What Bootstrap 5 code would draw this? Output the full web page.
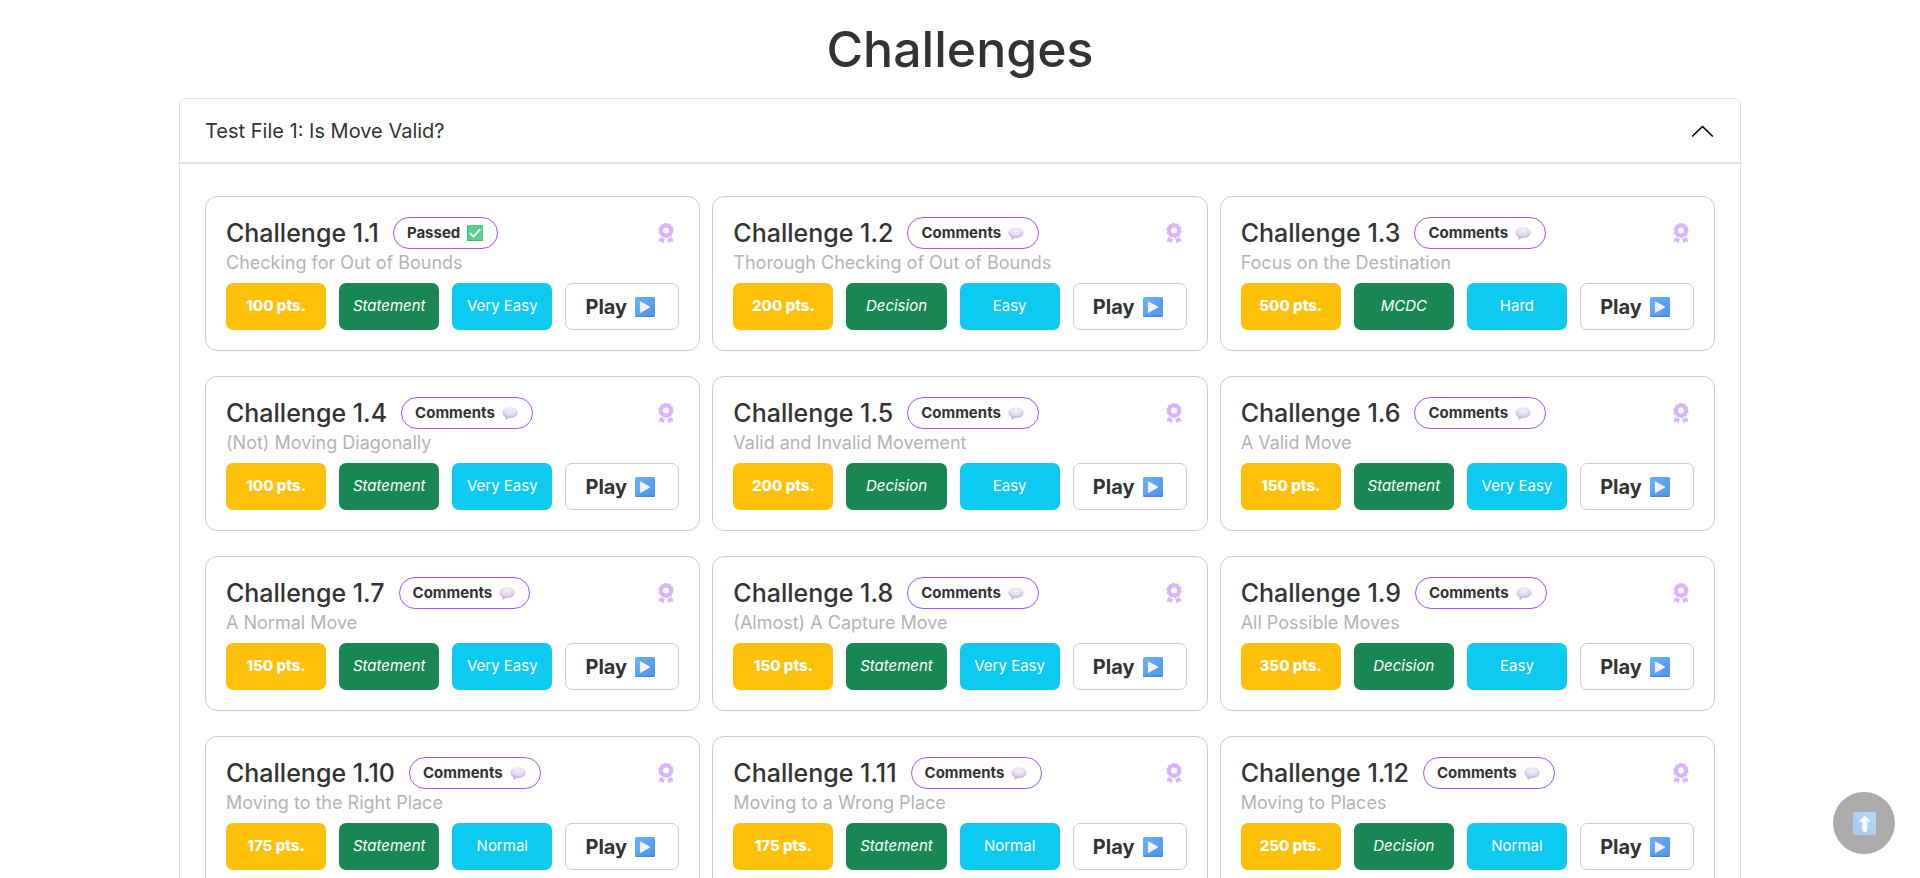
<!DOCTYPE html>
<html lang="en">
<head>
<meta charset="utf-8">
<meta name="viewport" content="width=device-width, initial-scale=1">
<title>Challenges</title>
<link href="https://cdn.jsdelivr.net/npm/bootstrap@5.3.0/dist/css/bootstrap.min.css" rel="stylesheet">
<style>
  body { font-family: Inter, "Liberation Sans", sans-serif; color: #333; background: #fff; }
  .page-title { font-size: 50px; line-height: 60px; font-weight: 500; padding: 19px 0; }
  .board { max-width: 1562px; }
  .accordion { --bs-accordion-color: #333; --bs-accordion-border-color: #dee2e6; --bs-accordion-border-radius: 6px; --bs-accordion-inner-border-radius: 5px; }
  .file-toggle.accordion-button { font-size: 20px; line-height: 24px; padding: 19px 25px; color: #333; background: #fff; box-shadow: none; border-bottom: 2px solid #dee2e6; }
  .file-toggle::after { display: none; }
  .file-toggle.collapsed .chevron { transform: rotate(180deg); }
  .file-body { padding: 32px 25px; }
  .challenge-grid { --bs-gutter-x: 12px; --bs-gutter-y: 25px; }
  .challenge { border: 1px solid #ccc; border-radius: 12px; padding: 20px; }
  .challenge h2 { font-size: 25px; line-height: 32px; font-weight: 500; color: #333; }
  .subtitle { font-size: 18px; line-height: 22px; font-weight: 400; color: #b3b3b3; margin: 3px 0 9px; }
  .pill { height: 32px; padding: 0 14px 0 13px; border: 1px solid #a855f7; border-radius: 16px; background: #fff; color: #333; font-size: 15px; font-weight: 700; margin-left: 14px; gap: 7px; }
  .tags { gap: 13px; }
  .tag { flex: 1 1 0; height: 47px; border-radius: 7px; color: #fff; font-size: 15px; white-space: nowrap; }
  .points { font-weight: 800; }
  .play { flex: 0 0 114px; height: 47px; padding: 0 8px 0 4px; border: 1px solid #ccc; border-radius: 7px; background: #fff; color: #333; font-size: 20px; font-weight: 700; gap: 8px; }
  .medal { color: #d8b4fe; margin-right: 5px; }
  .to-top { right: 25px; bottom: 24px; width: 62px; height: 62px; background: #acacac; }
</style>
</head>
<body>
<svg width="0" height="0" class="position-absolute" aria-hidden="true">
  <defs>
    <linearGradient id="g-blue" x1="0" y1="0" x2="1" y2="1"><stop offset="0" stop-color="#67b3ff"/><stop offset="1" stop-color="#4f93e8"/></linearGradient>
    <linearGradient id="g-pale" x1="0" y1="1" x2="1" y2="0"><stop offset="0" stop-color="#a9c6ea"/><stop offset="1" stop-color="#b4dafa"/></linearGradient>
    <linearGradient id="g-green" x1="0" y1="0" x2="1" y2="1"><stop offset="0" stop-color="#50cf88"/><stop offset="1" stop-color="#56d78c"/></linearGradient>
    <radialGradient id="g-bubble" cx=".5" cy=".3" r=".65"><stop offset="0" stop-color="#f5f0f9"/><stop offset=".6" stop-color="#e5dcef"/><stop offset="1" stop-color="#cbb9df"/></radialGradient>
    <symbol id="i-medal" viewBox="0 0 16 21">
      <circle cx="8" cy="7.5" r="5" fill="none" stroke="currentColor" stroke-width="4"/>
      <circle cx="8" cy="7.5" r="7" fill="none" stroke="currentColor" stroke-width="1.2" stroke-dasharray="2.6 1.8"/>
      <path fill="currentColor" d="M2 14.3l5 1.8-1.9 4.4-1.7-2-3 .3zM14 14.3l-5 1.8 1.9 4.4 1.7-2 3 .3z"/>
    </symbol>
    <symbol id="i-play" viewBox="0 0 20 20">
      <rect width="20" height="20" rx="1.5" fill="url(#g-blue)"/><path d="M.5 19.2h19" stroke="#3f7dd3" stroke-width="1"/>
      <path d="M5.4 4.8v10.6L14.8 10.1z" fill="#f5efff" stroke="#f5efff" stroke-width="1" stroke-linejoin="round"/>
    </symbol>
    <symbol id="i-check" viewBox="0 0 16 16">
      <rect width="16" height="16" rx="1.2" fill="url(#g-green)"/><path d="M.4 .5v15h15.2" fill="none" stroke="#3fb573" stroke-width=".8"/>
      <path d="M3.6 8.6l3 3 6-7" fill="none" stroke="#f3f3fb" stroke-width="1.9" stroke-linecap="round" stroke-linejoin="round"/>
    </symbol>
    <symbol id="i-bubble" viewBox="0 0 16 13">
      <path d="M3.4 8.5v3.6c0 .7.8.7 1.3.3L8 10z" fill="#c9b8dc"/><ellipse cx="8" cy="5.6" rx="7.7" ry="5.4" fill="url(#g-bubble)"/>
    </symbol>
    <symbol id="i-up" viewBox="0 0 23 23">
      <rect width="23" height="23" rx="2" fill="url(#g-pale)"/>
      <path d="M11.8 4.3L17 9.2h-3.2v8.5a2 2 0 0 1-4 0V9.2H6.6z" fill="#f9f6ff" stroke="#f9f6ff" stroke-width="1" stroke-linejoin="round"/>
    </symbol>
  </defs>
</svg>

<main class="board mx-auto">
  <h1 class="page-title text-center m-0">Challenges</h1>
  <div class="accordion" id="files">
    <div class="accordion-item">
      <div class="accordion-header">
        <button class="accordion-button file-toggle justify-content-between" type="button" data-bs-toggle="collapse" data-bs-target="#file1" aria-expanded="true" aria-controls="file1">
          Test File 1: Is Move Valid?
          <svg class="chevron" width="25" height="25" viewBox="0 0 25 25" fill="none" stroke="#000" stroke-width="1.7" stroke-linecap="round" stroke-linejoin="round" aria-hidden="true"><path d="M2.7 18l9.8-9.5 9.8 9.5"/></svg>
        </button>
      </div>
      <div id="file1" class="accordion-collapse collapse show">
        <div class="file-body">
          <div class="row challenge-grid row-cols-1 row-cols-md-2 row-cols-xl-3" id="challenges"></div>
        </div>
      </div>
    </div>
  </div>
</main>

<button type="button" class="to-top btn p-0 border-0 rounded-circle position-fixed d-flex align-items-center justify-content-center" aria-label="Back to top"><svg width="23" height="23" aria-hidden="true"><use href="#i-up"/></svg></button>

<script>
  const challenges = [
    ["1.1", "Checking for Out of Bounds", 100, "Statement", "Very Easy", true],
    ["1.2", "Thorough Checking of Out of Bounds", 200, "Decision", "Easy"],
    ["1.3", "Focus on the Destination", 500, "MCDC", "Hard"],
    ["1.4", "(Not) Moving Diagonally", 100, "Statement", "Very Easy"],
    ["1.5", "Valid and Invalid Movement", 200, "Decision", "Easy"],
    ["1.6", "A Valid Move", 150, "Statement", "Very Easy"],
    ["1.7", "A Normal Move", 150, "Statement", "Very Easy"],
    ["1.8", "(Almost) A Capture Move", 150, "Statement", "Very Easy"],
    ["1.9", "All Possible Moves", 350, "Decision", "Easy"],
    ["1.10", "Moving to the Right Place", 175, "Statement", "Normal"],
    ["1.11", "Moving to a Wrong Place", 175, "Statement", "Normal"],
    ["1.12", "Moving to Places", 250, "Decision", "Normal"]
  ];
  document.getElementById("challenges").innerHTML = challenges.map(([id, subtitle, points, coverage, level, passed]) => `
    <div class="col">
      <article class="challenge">
        <div class="d-flex align-items-center">
          <h2 class="m-0">Challenge ${id}</h2>
          <button type="button" class="pill d-inline-flex align-items-center">${passed
            ? '<span>Passed</span><svg width="16" height="16" aria-hidden="true"><use href="#i-check"/></svg>'
            : '<span>Comments</span><svg width="16" height="13" aria-hidden="true"><use href="#i-bubble"/></svg>'}</button>
          <svg class="medal ms-auto" width="16" height="21" aria-hidden="true"><use href="#i-medal"/></svg>
        </div>
        <p class="subtitle">${subtitle}</p>
        <div class="tags d-flex">
          <span class="tag points bg-warning d-flex align-items-center justify-content-center">${points} pts.</span>
          <span class="tag bg-success fst-italic d-flex align-items-center justify-content-center">${coverage}</span>
          <span class="tag bg-info d-flex align-items-center justify-content-center">${level}</span>
          <button type="button" class="play d-flex align-items-center justify-content-center">Play <svg width="20" height="20" aria-hidden="true"><use href="#i-play"/></svg></button>
        </div>
      </article>
    </div>`).join("");
</script>
<script src="https://cdn.jsdelivr.net/npm/bootstrap@5.3.0/dist/js/bootstrap.bundle.min.js"></script>
</body>
</html>
